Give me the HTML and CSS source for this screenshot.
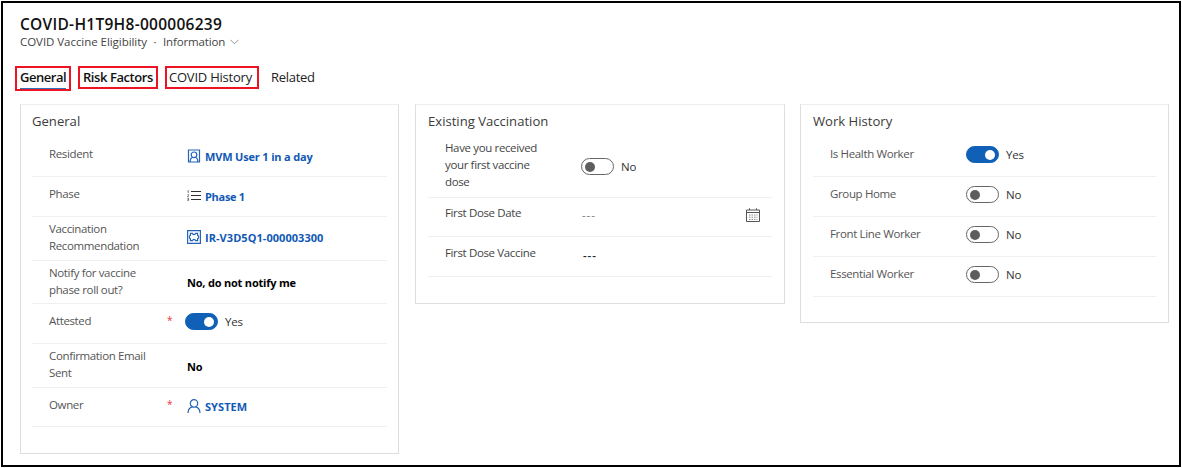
FILE: index.html
```
<!DOCTYPE html>
<html lang="en">
<head>
<meta charset="utf-8">
<title>COVID Vaccine Eligibility</title>
<link rel="stylesheet" href="styles.css">
</head>
<body>
<main class="frame">
  <header class="record">
    <h1 class="record-title">COVID-H1T9H8-000006239</h1>
    <div class="record-sub">
      <span>COVID Vaccine Eligibility</span><span class="dot">·</span><span class="form-name">Information</span>
      <svg class="chevron" viewBox="0 0 9 6"><path d="M.5 .8 4.5 4.8 8.5 .8"/></svg>
    </div>
  </header>
  <nav class="tabs">
    <a class="tab marked general"><span>General</span></a>
    <a class="tab marked risk"><span>Risk Factors</span></a>
    <a class="tab marked history"><span>COVID History</span></a>
    <a class="tab related"><span>Related</span></a>
  </nav>
  <div class="cards">
    <section class="card card-general">
      <h2>General</h2>
      <div class="row"><div class="label">Resident</div><div class="req"></div>
        <div class="value link"><svg class="icon" viewBox="0 0 14 14"><path d="M1.500 1h11v12h-11zM3.200 13V11.600Q3.500 9 5.600 8.300M10.800 13V11.600Q10.500 9 8.400 8.300"/><circle cx="7" cy="5.800" r="2.800"/></svg><span class="user">MVM User 1 in a day</span></div></div>
      <div class="row"><div class="label">Phase</div><div class="req"></div>
        <div class="value link"><svg class="icon list" viewBox="0 0 14 14"><path d="M4 2.500h10M4 6.500h10M4 10.500h10"/><path class="nums" d="M.5 2.200 1.300 1.500V4M.4 5.600h1.200v.9L.4 7.700h1.400M.4 9.300h1.200v2.200H.4M.6 10.400h1"/></svg><span class="phase">Phase 1</span></div></div>
      <div class="row tall"><div class="label">Vaccination<br>Recommendation</div><div class="req"></div>
        <div class="value link"><svg class="icon" viewBox="0 0 14 14"><path d="M.6 .6h12.800v12.800H.6z"/><path d="M3.400 3.400h2.100Q5.700 4.700 7 4.700t1.500-1.300h2.100v2q1.100.3 1.100 1.600t-1.100 1.600v2H8.500Q8.300 9.300 7 9.300t-1.500 1.300H3.400v-2Q2.300 8.300 2.300 7t1.100-1.600z"/></svg><span class="reco">IR-V3D5Q1-000003300</span></div></div>
      <div class="row tall"><div class="label">Notify for vaccine<br>phase roll out?</div><div class="req"></div>
        <div class="value strong">No, do not notify me</div></div>
      <div class="row"><div class="label">Attested</div><div class="req">*</div>
        <div class="value sw"><i class="toggle on"></i><span class="state">Yes</span></div></div>
      <div class="row tall"><div class="label">Confirmation Email<br>Sent</div><div class="req"></div>
        <div class="value strong">No</div></div>
      <div class="row last"><div class="label">Owner</div><div class="req">*</div>
        <div class="value link"><svg class="icon" viewBox="0 0 14 14"><circle cx="7" cy="4.400" r="3.700"/><path d="M1 14Q1.300 8.500 5.600 7.900M13 14Q12.700 8.500 8.400 7.900"/></svg><span class="reco">SYSTEM</span></div></div>
    </section>
    <section class="card card-vacc">
      <h2>Existing Vaccination</h2>
      <div class="row triple"><div class="label">Have you received<br>your first vaccine<br>dose</div>
        <div class="value sw"><i class="toggle"></i><span class="state">No</span></div></div>
      <div class="row date"><div class="label">First Dose Date</div>
        <div class="value dash"><span>---</span><svg class="calendar" viewBox="0 0 14 14"><path d="M.5 2h13v11.500H.5zM.5 4.500h13M3.500 .3V2M10.500 .3V2"/><path class="days" d="M3 7h8.500M3 9.200h8.500M3 11.400h8.500"/></svg></div></div>
      <div class="row dose"><div class="label">First Dose Vaccine</div>
        <div class="value dash dark"><span>---</span></div></div>
    </section>
    <section class="card card-work">
      <h2>Work History</h2>
      <div class="row"><div class="label">Is Health Worker</div><div class="value sw"><i class="toggle on"></i><span class="state">Yes</span></div></div>
      <div class="row"><div class="label">Group Home</div><div class="value sw"><i class="toggle"></i><span class="state">No</span></div></div>
      <div class="row"><div class="label">Front Line Worker</div><div class="value sw"><i class="toggle"></i><span class="state">No</span></div></div>
      <div class="row"><div class="label">Essential Worker</div><div class="value sw"><i class="toggle"></i><span class="state">No</span></div></div>
    </section>
  </div>
</main>
</body>
</html>
```
FILE: styles.css
```
* { box-sizing: border-box; }
body { margin: 0; background: #fff; font-family: "Open Sans", "Noto Sans", sans-serif; font-size: 11.5px; color: #444; }
.frame { width: 1180px; height: 466px; margin: 1px; border: 2px solid #000; padding: 10px 0 0 17px; white-space: nowrap; }
.record { height: 53px; }
.record-title { margin: 0; height: 21px; line-height: 22px; font-size: 15.5px; font-weight: 600; letter-spacing: .27px; color: #111; }
.record-sub { display: flex; align-items: center; height: 16px; line-height: 16px; font-size: 11.5px; font-weight: 500; letter-spacing: -.05px; }
.dot { width: 16px; text-align: center; }
.form-name { letter-spacing: -.15px; }
.chevron { width: 9px; height: 6px; margin-left: 5px; fill: none; stroke: #888; stroke-width: .9; }
.tabs { display: flex; margin-left: -5px; height: 38px; font-size: 13px; color: #222; }
.tab { height: 23px; line-height: 19px; border: 2px solid transparent; padding-left: 3px; }
.marked { border-color: #ec1422; }
.general { width: 56px; height: 25px; font-weight: 600; letter-spacing: -.45px; color: #111; }
.general span { display: inline-block; height: 21px; border-bottom: 1px solid #2f73bd; }
.risk { width: 80px; margin-left: 7px; font-weight: 600; letter-spacing: -.43px; color: #111; }
.history { width: 94px; margin-left: 7px; padding-left: 2px; letter-spacing: -.22px; }
.related { margin-left: 7px; letter-spacing: -.3px; }
.cards { display: flex; align-items: flex-start; }
.card { border: 1px solid #dedede; border-top-color: #eee; padding: 0 11px; }
.card-general { width: 379px; height: 350px; }
.card-vacc { width: 370px; height: 200px; margin-left: 16px; padding: 0 12px; }
.card-work { width: 369px; height: 219px; margin-left: 15px; padding: 0 12px; }
h2 { margin: 0; height: 32px; line-height: 32px; font-size: 13.1px; font-weight: 400; color: #3b3b3b; }
.row { display: flex; height: 40px; border-bottom: 1px solid #efefef; padding-left: 17px; }
.tall { height: 43.5px; }
.last { height: 39.5px; }
.triple { height: 61px; }
.date { height: 39px; }
.label { width: 116px; padding-top: 8px; line-height: 17px; letter-spacing: -.36px; color: #555; }
.tall .label { padding-top: 3px; }
.card-vacc .label, .card-work .label { width: 136px; }
.card-vacc .label { color: #444; }
.card-vacc .triple .label { padding-top: 2px; }
.card-vacc .date .label { padding-top: 6px; }
.card-vacc .dose .label { padding-top: 7px; }
.req { width: 22px; padding: 8px 0 0 2px; color: #e33; font-size: 10px; line-height: 17px; }
.value { display: flex; flex: 1; align-items: center; }
.link { color: #1159b5; font-weight: 700; font-size: 11px; }
.user { letter-spacing: -.17px; }
.phase { letter-spacing: -.3px; }
.reco { letter-spacing: .05px; }
.strong { color: #000; font-weight: 700; font-size: 11px; letter-spacing: -.2px; padding-top: 2px; }
.link span { padding-bottom: 1px; }
.icon { width: 14px; height: 14px; margin: 0 4px 2px 0; flex: none; fill: none; stroke: #2563b8; stroke-width: 1.2; }
.list { stroke: #333; stroke-width: 1; }
.nums { stroke-width: .6; }
.sw { margin-left: -2px; padding-bottom: 4px; }
.card-vacc .sw, .card-work .sw { margin-left: 0; }
.card-vacc .sw { padding-bottom: 1px; }
.toggle { display: flex; align-items: center; width: 33px; height: 17px; margin-right: 7px; border: 1px solid #666; border-radius: 9px; padding: 0 3px; background: #fff; }
.toggle::before { content: ""; width: 10px; height: 10px; border-radius: 50%; background: #605e5c; }
.on { background: #1060b8; border-color: #1060b8; justify-content: flex-end; }
.on::before { background: #fff; }
.state { color: #333; letter-spacing: -.25px; }
.dash { justify-content: space-between; padding: 0 12px 5px 1px; color: #777; letter-spacing: .9px; }
.dark { padding: 0 0 2px 2px; color: #222; font-weight: 600; }
.calendar { width: 14px; height: 14px; fill: none; stroke: #555; stroke-width: 1; }
.days { stroke: #888; stroke-dasharray: 1.5 1; }
```
